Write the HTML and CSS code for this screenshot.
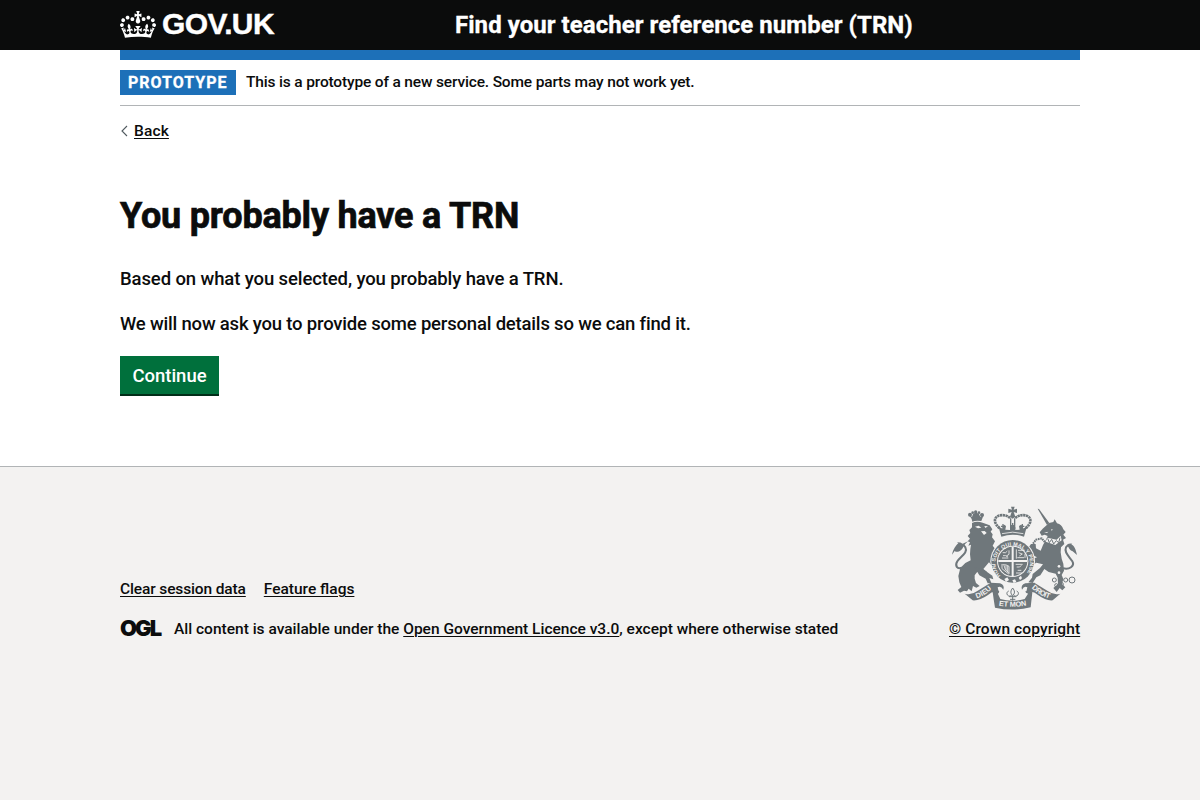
FILE: index.html
```html
<!DOCTYPE html>
<html lang="en">
<head>
<meta charset="utf-8">
<title>You probably have a TRN</title>
<link rel="stylesheet" href="styles.css">
</head>
<body>
<header class="header">
  <div class="container header-row">
    <a class="logo" href="#">
      <svg class="crown" viewBox="0 0 132 97" width="36" height="27" preserveAspectRatio="none" aria-hidden="true"><path fill="currentColor" fill-rule="evenodd" d="M25 30.2c3.5 1.5 7.7-.2 9.1-3.7 1.5-3.6-.2-7.8-3.9-9.2-3.6-1.4-7.6.3-9.1 3.9-1.4 3.5.3 7.5 3.9 9zM9 39.5c3.6 1.5 7.8-.2 9.2-3.7 1.5-3.6-.2-7.8-3.9-9.1-3.6-1.5-7.6.2-9.1 3.8-1.4 3.5.3 7.5 3.8 9zM4.4 57.2c3.5 1.5 7.7-.2 9.1-3.8 1.5-3.6-.2-7.7-3.9-9.1-3.5-1.5-7.6.3-9.1 3.8-1.4 3.5.3 7.6 3.9 9.1zm38.3-21.4c3.5 1.5 7.7-.2 9.1-3.8 1.5-3.6-.2-7.7-3.9-9.1-3.6-1.5-7.6.3-9.1 3.8-1.3 3.6.4 7.7 3.9 9.1zm64.4-5.6c-3.6 1.5-7.8-.2-9.1-3.7-1.5-3.6.2-7.8 3.8-9.2 3.6-1.4 7.7.3 9.2 3.9 1.3 3.5-.4 7.5-3.9 9zm15.9 9.3c-3.6 1.5-7.7-.2-9.1-3.7-1.5-3.6.2-7.8 3.7-9.1 3.6-1.5 7.7.2 9.2 3.8 1.5 3.5-.3 7.5-3.8 9zm4.7 17.7c-3.6 1.5-7.8-.2-9.2-3.8-1.5-3.6.2-7.7 3.9-9.1 3.6-1.5 7.7.3 9.2 3.8 1.3 3.5-.4 7.6-3.9 9.1zM89.3 35.8c-3.6 1.5-7.8-.2-9.2-3.8-1.4-3.6.2-7.7 3.9-9.1 3.6-1.5 7.7.3 9.2 3.8 1.4 3.6-.3 7.7-3.9 9.1zM69.7 17.7l8.9 4.7V9.3l-8.9 2.8c-.2-.3-.5-.6-.9-.9L72.4 0H59.6l3.5 11.2c-.3.3-.6.5-.9.9l-8.8-2.8v13.1l8.8-4.7c.3.3.6.7.9.9l-5 15.4v.1c-.2.8-.4 1.6-.4 2.4 0 4.1 3.1 7.5 7 8.1h.2c.3 0 .7.1 1 .1.4 0 .7 0 1-.1h.2c4-.6 7.1-4.1 7.1-8.1 0-.8-.1-1.7-.4-2.4V34l-5.1-15.4c.4-.2.7-.6 1-.9zM66 92.8c16.9 0 32.8 1.1 47.1 3.2 4-16.9 8.9-26.7 14-33.5l-9.6-3.4c1 4.9 1.1 7.2 0 10.2-1.5-1.4-3-4.3-4.2-8.7L108.6 76c2.8-2 5-3.2 7.5-3.3-4.4 9.4-10 11.9-13.6 11.2-4.3-.8-6.3-4.6-5.6-7.9 1-4.7 5.7-5.9 8-.5 4.3-8.7-3-11.4-7.6-8.8 7.1-7.2 7.9-13.5 2.1-21.1-8 6.1-8.1 12.3-4.5 20.8-4.7-5.4-12.1-2.5-9.5 6.2 3.4-5.2 7.9-2 7.2 3.1-.6 4.3-6.4 7.8-13.5 7.2-10.3-.9-10.9-8-11.2-13.8 2.5-.5 7.1 1.8 11 7.3L80.2 60c-4.1 4.4-8 5.3-12.3 5.4 1.4-4.4 8-11.6 8-11.6H55.5s6.4 7.2 7.9 11.6c-4.2-.1-8-1-12.3-5.4l1.4 16.4c3.9-5.5 8.5-7.7 10.9-7.3-.3 5.8-.9 12.8-11.1 13.8-7.2.6-12.9-2.9-13.5-7.2-.7-5 3.8-8.3 7.1-3.1 2.7-8.7-4.6-11.6-9.4-6.2 3.7-8.5 3.6-14.7-4.6-20.8-5.8 7.6-5 13.9 2.2 21.1-4.7-2.6-11.9.1-7.7 8.8 2.3-5.5 7.1-4.2 8.1.5.7 3.3-1.3 7.1-5.7 7.9-3.5.7-9-1.8-13.5-11.2 2.5.1 4.7 1.3 7.5 3.3l-4.7-15.4c-1.2 4.4-2.7 7.2-4.3 8.7-1.1-3-.9-5.3 0-10.2l-9.5 3.4c5 6.9 9.9 16.7 14 33.5 14.8-2.1 30.8-3.2 47.7-3.2z"/></svg>
      <span class="logo-text">GOV.UK</span>
    </a>
    <a class="service" href="#">Find your teacher reference number (TRN)</a>
  </div>
</header>
<div class="container">
  <div class="blue-bar"></div>
  <div class="phase">
    <strong class="tag">PROTOTYPE</strong>
    <span class="phase-text">This is a prototype of a new service. Some parts may not work yet.</span>
  </div>
  <a class="back" href="#"><svg class="chevron" width="8" height="12" viewBox="0 0 8 12" aria-hidden="true"><path d="M7 1 2 6l5 5" fill="none" stroke="#505a5f" stroke-width="1.1"/></svg><span class="back-text">Back</span></a>
  <main class="main">
    <h1 class="title">You probably have a TRN</h1>
    <p class="body body-first">Based on what you selected, you probably have a TRN.</p>
    <p class="body body-second">We will now ask you to provide some personal details so we can find it.</p>
    <button class="button" type="button">Continue</button>
  </main>
</div>
<footer class="footer">
  <div class="container footer-row">
    <div class="footer-left">
      <nav class="links"><a class="link-clear" href="#">Clear session data</a><a class="link-flags" href="#">Feature flags</a></nav>
      <div class="licence"><span class="ogl">OGL</span><span class="licence-text">All content is available under the <a href="#">Open Government Licence v3.0</a>, except where otherwise stated</span></div>
    </div>
    <div class="footer-right">
      <svg class="crest" width="126" height="104" viewBox="36 18 378 312" aria-hidden="true">
        <defs>
          <path id="garter" d="M182 227A52 52 0 1 1 254 227"/>
          <path id="ribbonLeft" d="M110 295Q136 287 158 264"/>
          <path id="ribbonMid" d="M176 317Q217 324 262 316"/>
          <path id="ribbonRight" d="M275 264Q298 287 332 297"/>
        </defs>
        <g class="ink">
          <!-- lion -->
          <path d="M86 43 95 57 97 65Q108 60 124 63L131 45 121 51 117 42 108 37 99 42 96 51Z"/>
          <circle cx="107" cy="36" r="5"/><circle cx="90" cy="44" r="6"/><circle cx="126" cy="45" r="6"/><circle cx="98" cy="38" r="4"/><circle cx="117" cy="38" r="4"/>
          <path d="M96 69Q110 62 128 68L149 76 157 88 152 95 158 103 156 112 165 124 158 137 168 150 169 166 155 158 160 174 154 184 166 196 158 200 147 187 130 207 141 216 129 221 112 215 104 226 104 236 108 249 119 258 109 263 99 258 95 274 86 266 81 274 72 272 60 278 53 270 64 261 58 247 55 228 61 204 76 189 92 181 90 163 91 147 93 134 85 137 90 127 83 124 90 116 83 108 91 99 88 90 96 82Z"/>
          <path d="M103 201 132 209 157 227 160 238 148 234 154 249 143 250 137 236 118 226Z"/>
          <!-- unicorn -->
          <path d="M293 26 297 27 328 69 321 75Z"/>
          <path d="M327 69 340 66 344 58 351 70Q365 73 370 88L377 96 370 104 378 114 369 119 373 132 363 142 362 157Q364 178 370 191L372 212 365 225 370 237 366 252 376 262 367 271 359 264 350 276 340 264 354 252 353 233 347 221 326 216 313 207 301 226 289 232 278 249 265 247 276 233 278 222 300 204 309 193 289 188 278 194 268 188 277 177 291 172 276 164 274 150 265 143 273 132 287 132 288 145 302 152 309 135 317 121 323 108 314 104 305 107 299 97 308 86 318 77Z"/>
        </g>
        <g class="line">
          <path d="M66 203C51 209 44 197 52 184 61 170 85 158 76 142 71 133 64 134 58 138" stroke-width="6"/>
          <path d="M369 205C388 210 405 198 397 184 388 170 371 157 378 142 384 132 391 135 396 144" stroke-width="6"/>
          <path d="M279 131 288 119 305 115 318 130 341 136 361 128" stroke-width="6" stroke-dasharray="5 2"/>
          <circle cx="343" cy="240" r="6"/><circle cx="364" cy="253" r="6"/><circle cx="377" cy="240" r="6"/><circle cx="396" cy="240" r="9"/><circle cx="349" cy="256" r="5"/>
        </g>
        <path class="ink" d="M36 164C40 146 48 136 55 130L51 127Q63 127 68 131L84 124Q76 131 71 138C66 152 52 160 44 153Z"/>
        <path class="ink" d="M411 165C407 147 403 138 394 133L397 131Q388 129 382 133 387 151 398 154Z"/>
        <g class="cut">
          <path d="M105 80 116 77 124 83 114 85ZM133 78 144 79 136 84ZM123 94 134 93 140 99 132 105Z"/>
          <path d="M334 87 339 89 334 92ZM312 98 325 95 321 99Z"/>
          <path d="M322 113 350 119 362 107 365 121 346 135 317 125Z"/>
          <circle cx="357" cy="199" r="4"/><circle cx="357" cy="218" r="4"/>
        </g>
        <path class="line" d="M323 115 328 128 335 118 341 132 349 122 356 128 360 113" stroke-width="4"/>
        <!-- garter and quartered shield -->
        <circle class="cut" cx="218" cy="184" r="67"/>
        <circle class="ink" cx="218" cy="184" r="64"/>
        <circle class="cut" cx="218" cy="184" r="47"/>
        <circle class="ink" cx="218" cy="184" r="44"/>
        <path class="cut" d="M215 141h6v87h-6zM175 180h86v6h-86z"/>
        <g class="cut-line">
          <path d="M188 158h9l5-5M189 167h8l7 4M207 151v12l-8 5M186 174h19M229 148v28M234 151h20M236 158l11 4-9 6M232 173h20M255 161v13M227 193h21M230 201h9l5-5M233 211h11M228 219h18"/>
          <path d="M188 194Q199 193 207 199V221M192 196Q192 208 207 220M198 196v15M203 198v18M186 192v14l20 16"/>
        </g>
        <text class="garter-text"><textPath href="#garter" textLength="236">HONI SOIT QUI MAL Y PENSE</textPath></text>
        <path class="cut" d="M193 237 202 232 207 240 198 246ZM217 241l8-3 4 7-8 4ZM236 233l7-6 3 8-6 5Z"/>
        <!-- central crown -->
        <path class="cut" d="M180 84H256L253 113Q218 102 183 113Z"/>
        <g class="ink">
          <path d="M213 20h11l-3 9 10-3v13l-10-3 5 14-8 6-8-6 5-14-10 3V26l11 3Z"/>
          <path d="M176 82 189 86 188 78 193 74 198 78 196 89 210 90 210 82 218 74 226 82 226 90 239 89 237 78 243 74 248 78 246 86 260 82 252 110Q218 98 184 110Z"/>
        </g>
        <g class="line">
          <path d="M179 85C141 51 189 33 211 55M257 85C295 51 247 33 225 55" stroke-width="8" stroke-dasharray="7 1.5"/>
          <path d="M212 55V88M224 55V88M189 72v19M247 72v19M218 69v23M183 79h12M241 79h12M211 77h14" stroke-width="4"/>
        </g>
        <path d="M186 101Q218 92 250 101" fill="none" stroke="#f3f2f1" stroke-width="2.5"/>
        <!-- motto ribbon -->
        <g class="ink">
          <path d="M74 281Q93 287 112 273L152 248 180 250Q195 255 190 269 183 257 173 262L177 280Q162 269 144 285 118 303 98 301Z"/>
          <path d="M361 281Q342 287 323 273L283 248 256 250Q241 255 246 269 252 257 262 262L258 280Q275 269 294 285 318 303 338 301Z"/>
          <path d="M161 298 158 276Q168 269 178 273L174 282 181 297Q217 308 254 297L264 281 255 275Q270 269 277 277L272 322Q218 335 165 323Z"/>
        </g>
        <path class="line" d="M218 264Q207 277 218 287 229 277 218 264M215 287C201 293 196 277 206 273M221 287C235 293 240 277 230 273M207 290H229M218 289V302M210 298H226" stroke-width="4"/>
        <g class="motto">
          <text><textPath href="#ribbonLeft" textLength="54">DIEU</textPath></text>
          <text><textPath href="#ribbonMid" textLength="84">ET MON</textPath></text>
          <text><textPath href="#ribbonRight" textLength="62">DROIT</textPath></text>
        </g>
      </svg>
      <a class="copyright" href="#">© Crown copyright</a>
    </div>
  </div>
</footer>
</body>
</html>
```
FILE: styles.css
```css
* { box-sizing: border-box; }
html { background: #f3f2f1; }
body { margin: 0; background: #fff; color: #0b0c0c; font-family: Roboto, "Liberation Sans", sans-serif; font-weight: 500; }
a { color: inherit; text-underline-offset: 2px; text-decoration-thickness: 1px; }
.container { width: 960px; margin: 0 auto; }
.header { height: 50px; background: #0b0c0c; color: #fff; }
.header-row { display: flex; height: 50px; }
.header a { text-decoration: none; }
.logo { display: flex; width: 335px; padding-top: 11px; }
.logo-text { margin: -2px 0 0 6px; font: 700 30px/30px "Liberation Sans", Arial, sans-serif; letter-spacing: -.6px; -webkit-text-stroke: .4px currentColor; }
.service { padding-top: 10px; font-size: 24px; line-height: 30px; font-weight: 700; letter-spacing: .05px; white-space: nowrap; -webkit-text-stroke: .3px currentColor; }
.blue-bar { height: 10px; background: #1d70b8; }
.phase { display: flex; height: 46px; padding-top: 10px; border-bottom: 1px solid #b1b4b6; }
.tag { width: 116px; height: 25px; padding-left: 8px; background: #1d70b8; color: #fff; font-size: 16px; line-height: 25px; font-weight: 700; letter-spacing: 1px; -webkit-text-stroke: .3px currentColor; }
.phase-text { margin-left: 10px; font-size: 15.5px; line-height: 24px; letter-spacing: -.16px; white-space: nowrap; }
.back { display: flex; align-items: center; width: max-content; height: 20px; margin-top: 15px; font-size: 15.5px; text-decoration: none; }
.chevron { margin-right: 6px; }
.back-text { text-decoration: underline; text-underline-offset: 2px; text-decoration-thickness: 1px; letter-spacing: .15px; }
.main { padding: 54px 0 70px; }
.title { margin: 0 0 30px; font-size: 36px; line-height: 42px; font-weight: 700; letter-spacing: -.2px; -webkit-text-stroke: .7px currentColor; }
.body { margin: 0 0 20px; font-size: 18.5px; line-height: 25px; }
.body-first { letter-spacing: -.11px; }
.body-second { margin-bottom: 19px; letter-spacing: -.19px; }
.button { display: block; width: 99px; height: 40px; padding: 1px 0 0; border: 0; border-bottom: 2px solid #002d18; background: #00703c; color: #fff; font: 500 18.5px/38px Roboto, sans-serif; }
.footer { border-top: 1px solid #b1b4b6; background: #f3f2f1; height: 334px; padding-top: 39px; }
.footer-row { display: flex; justify-content: space-between; }
.footer-left { padding-top: 73px; font-size: 15.5px; line-height: 20px; }
.links { display: flex; gap: 18px; margin-bottom: 20px; }
.link-clear { letter-spacing: -.13px; }
.licence { display: flex; white-space: nowrap; }
.ogl { width: 54px; margin-top: -1px; font: 900 22px/20px Inter, sans-serif; letter-spacing: -2px; }
.footer-right { display: flex; flex-direction: column; width: 131px; font-size: 15.5px; line-height: 20px; letter-spacing: .11px; white-space: nowrap; }
.crest { margin: 0 0 9px 3px; }
.ink { fill: #6f777b; }
.cut { fill: #f3f2f1; }
.line { fill: none; stroke: #6f777b; stroke-width: 3; }
.cut-line { fill: none; stroke: #f3f2f1; stroke-width: 2.5; }
.garter-text { font: 700 16px "Liberation Sans", sans-serif; fill: #f3f2f1; }
.motto { font: 700 22px "Liberation Sans", sans-serif; fill: #f3f2f1; }
```
